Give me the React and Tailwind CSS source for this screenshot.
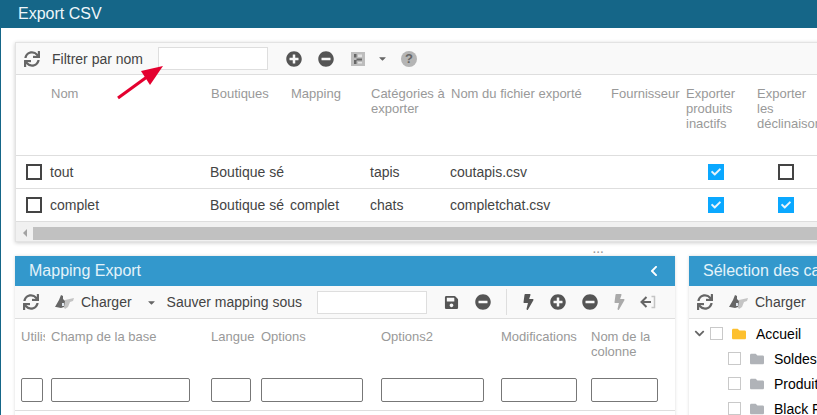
import React from "react";
import {
  FaCaretDown,
  FaCheck,
  FaChevronDown,
  FaChevronLeft,
  FaFolder,
  FaMinusCircle,
  FaPlusCircle,
  FaSave,
  FaBolt,
  FaSync,
} from "react-icons/fa";

const exportCols = [
  { label: "Nom", w: "w-[160px]" },
  { label: "Boutiques", w: "w-[80px]" },
  { label: "Mapping", w: "w-[80px]" },
  { label: "Catégories à exporter", w: "w-[80px]" },
  { label: "Nom du fichier exporté", w: "w-[160px]" },
  { label: "Fournisseur", w: "w-[75px]" },
  { label: "Exporter produits inactifs", w: "w-[71px]" },
  { label: "Exporter les déclinaisons", w: "w-[71px]" },
];

const exportRows = [
  { nom: "tout", boutique: "Boutique sé", mapping: "", cat: "tapis", file: "coutapis.csv", inactifs: true, decl: false },
  { nom: "complet", boutique: "Boutique sé", mapping: "complet", cat: "chats", file: "completchat.csv", inactifs: true, decl: true },
];

const mappingCols = [
  { label: "Utilisé", cell: "w-[30px]", head: "w-[24px]", input: "w-[22px]" },
  { label: "Champ de la base", cell: "w-[160px]", head: "w-[150px]", input: "w-[139px]" },
  { label: "Langue", cell: "w-[50px]", head: "w-[48px]", input: "w-[40px]" },
  { label: "Options", cell: "w-[120px]", head: "w-[110px]", input: "w-[102px]" },
  { label: "Options2", cell: "w-[120px]", head: "w-[110px]", input: "w-[103px]" },
  { label: "Modifications", cell: "w-[90px]", head: "w-[88px]", input: "w-[76px]" },
  { label: "Nom de la colonne", cell: "w-[70px]", head: "w-[68px]", input: "w-[67px]" },
];

const tree = [
  { label: "Accueil", root: true },
  { label: "Soldes" },
  { label: "Produits" },
  { label: "Black Friday" },
];

function LoadIcon() {
  return (
    <svg width="20" height="14" viewBox="0 0 20 14" className="shrink-0">
      <path d="M10 5l9-2-1 3-3 1-2 5-3 2-2-3 1-3z" fill="#c4c4c4" />
      <path d="M0 12L4 5l2-5 2 1 0 3 2 2-1 6-3 1-5-1z" fill="#666" />
      <path d="M7 8h2v3H7z" fill="#dfe6ee" />
    </svg>
  );
}

function ExitIcon({ className }) {
  return (
    <svg width="16" height="14" viewBox="0 0 16 14" className={className}>
      <path d="M6.5 2L1.5 7l5 5M2 7h9" fill="none" stroke="#666" strokeWidth="2" />
      <path d="M11.5 1.5h3v11h-3" fill="none" stroke="#c4c4c4" strokeWidth="1.5" />
    </svg>
  );
}

function LayoutIcon() {
  return (
    <svg width="14" height="14" viewBox="0 0 14 14" className="shrink-0">
      <rect width="14" height="14" fill="#bdbdbd" />
      <path d="M3 2h2.5v3.5H3zM3 8h2.5v4H3zM5.5 6.5H11v2H5.5z" fill="#666" />
      <path d="M7 2.5h4v2.5H7zM7 10h4v1.5H7z" fill="#e2e2e2" />
    </svg>
  );
}

function RowCheck({ checked }) {
  if (checked) {
    return (
      <span className="flex h-4 w-4 items-center justify-center bg-[#0aa8ff]">
        <FaCheck className="text-[10px] text-[#e8f4fb]" />
      </span>
    );
  }
  return <span className="block h-4 w-4 border-2 border-[#444]" />;
}

function PanelTitle({ children, chevron }) {
  return (
    <div className="flex h-[30px] items-center justify-between whitespace-nowrap bg-[#3398cc] pl-[14px] pr-[15px] text-base text-[#e4f3fa]">
      <span>{children}</span>
      {chevron && <FaChevronLeft className="text-[12px] text-white" />}
    </div>
  );
}

function LoadButton({ withCaret }) {
  return (
    <div className="flex items-center">
      <FaSync className="ml-2 h-4 w-4 shrink-0 text-[#666]" />
      <span className="ml-4">
        <LoadIcon />
      </span>
      <span className="ml-[6px] text-[#444]">Charger</span>
      {withCaret && <FaCaretDown className="ml-[14px] text-[11px] text-[#666]" />}
    </div>
  );
}

export default function App() {
  return (
    <div className="relative h-[415px] w-[817px] overflow-hidden border-l border-[#156688] bg-white font-['Liberation_Sans',Arial,sans-serif] text-sm text-[#444]">
      <div className="ml-[-1px] flex h-[28px] items-center bg-[#156688] pl-[18px] text-base text-[#eef6fa]">
        Export CSV
      </div>

      <div className="pl-[14px] pt-[14px]">
        <div className="w-[830px] overflow-hidden border border-[#e3e3e3] shadow-[0_1px_4px_rgba(0,0,0,0.2)]">
          <div className="flex h-[32px] items-center whitespace-nowrap border-b border-[#dedede] bg-[#f9f9f9]">
            <FaSync className="ml-2 h-4 w-4 shrink-0 text-[#666]" />
            <span className="ml-[12px] text-[#444]">Filtrer par nom</span>
            <div className="ml-[15px] h-[23px] w-[110px] border border-[#dedede] bg-white" />
            <FaPlusCircle className="ml-[18px] h-4 w-4 text-[#555]" />
            <FaMinusCircle className="ml-[16px] h-4 w-4 text-[#555]" />
            <span className="ml-[17px]">
              <LayoutIcon />
            </span>
            <FaCaretDown className="ml-[12px] text-[11px] text-[#666]" />
            <span className="ml-[13px] flex h-4 w-4 items-center justify-center rounded-full bg-[#b5b5b5] text-[13px] font-bold leading-none text-[#666]">
              ?
            </span>
          </div>

          <div className="flex h-[81px] border-b border-[#dedede] pl-[35px] pt-[11px] leading-[15px] text-[#999]">
            {exportCols.map((col) => (
              <div key={col.label} className={`${col.w} shrink-0 overflow-hidden pr-1 text-[13px]`}>
                {col.label}
              </div>
            ))}
          </div>

          {exportRows.map((row) => (
            <div key={row.nom} className="flex h-[33px] items-center border-b border-[#dedede] whitespace-nowrap pl-[10px]">
              <span className="w-[24px] shrink-0">
                <RowCheck checked={false} />
              </span>
              <span className="w-[160px] shrink-0">{row.nom}</span>
              <span className="w-[80px] shrink-0">{row.boutique}</span>
              <span className="w-[80px] shrink-0">{row.mapping}</span>
              <span className="w-[80px] shrink-0">{row.cat}</span>
              <span className="w-[160px] shrink-0">{row.file}</span>
              <span className="w-[98px] shrink-0" />
              <span className="w-[70px] shrink-0">
                <RowCheck checked={row.inactifs} />
              </span>
              <span className="w-[16px] shrink-0">
                <RowCheck checked={row.decl} />
              </span>
            </div>
          ))}

          <div className="flex h-[19px] items-center bg-[#f1f1f1] pt-[3px]">
            <div className="flex h-[13px] w-[17px] items-center justify-center">
              <span className="h-0 w-0 border-y-[4px] border-r-[4px] border-y-transparent border-r-[#a3a3a3]" />
            </div>
            <div className="h-[13px] flex-1 bg-[#c1c1c1]" />
          </div>
        </div>

        <div className="flex h-[14px] items-center pl-[578px] pt-[1px]">
          <span className="text-[10px] font-bold leading-none tracking-[1px] text-[#999]">...</span>
        </div>

        <div className="flex gap-[14px]">
          <div className="w-[660px] shrink-0 shadow-[0_0_3px_rgba(0,0,0,0.15)]">
            <PanelTitle chevron>Mapping Export</PanelTitle>
            <div className="flex h-[33px] items-center whitespace-nowrap border-b border-[#dedede] bg-[#f9f9f9]">
              <LoadButton withCaret />
              <span className="ml-[10px]">Sauver mapping sous</span>
              <div className="ml-[15px] h-[23px] w-[110px] border border-[#dedede] bg-white" />
              <FaSave className="ml-[17px] h-[15px] w-[15px] text-[#555]" />
              <FaMinusCircle className="ml-[16px] h-4 w-4 text-[#555]" />
              <span className="ml-[15px] h-[26px] w-px bg-[#dedede]" />
              <FaBolt className="ml-[16px] h-4 w-[11px] text-[#555]" />
              <FaPlusCircle className="ml-[16px] h-4 w-4 text-[#555]" />
              <FaMinusCircle className="ml-[16px] h-4 w-4 text-[#555]" />
              <FaBolt className="ml-[16px] h-4 w-[11px] text-[#aaa]" />
              <ExitIcon className="ml-[15px]" />
            </div>
            <div className="flex h-[92px] border-b border-[#dedede] pl-[6px]">
              {mappingCols.map((col) => (
                <div key={col.label} className={`${col.cell} flex shrink-0 flex-col`}>
                  <div className="h-[59px] pt-[10px]">
                    <div className={`${col.head} overflow-hidden text-[13px] leading-[15px] text-[#999]`}>
                      {col.label}
                    </div>
                  </div>
                  <div className={`${col.input} h-[24px] rounded-[2px] border border-[#777] bg-white`} />
                </div>
              ))}
            </div>
          </div>

          <div className="w-[200px] shrink-0 shadow-[0_0_3px_rgba(0,0,0,0.15)]">
            <PanelTitle>Sélection des catégories</PanelTitle>
            <div className="flex h-[33px] items-center whitespace-nowrap border-b border-[#dedede] bg-[#f9f9f9]">
              <LoadButton />
            </div>
            <div className="pt-[2px] whitespace-nowrap text-black">
              {tree.map((node) => (
                <div key={node.label} className={`flex h-[25px] items-center ${node.root ? "pl-[5px]" : "pl-[39px]"}`}>
                  {node.root && <FaChevronDown className="mr-[5px] w-[11px] text-[11px] text-[#666]" />}
                  <span className="h-[13px] w-[13px] shrink-0 border border-[#c9c9c9] bg-white" />
                  <FaFolder className={`ml-[8px] h-[14px] w-[16px] shrink-0 ${node.root ? "text-[#fdc02f]" : "text-[#b0b3b8]"}`} />
                  <span className="ml-[9px] text-[14px]">{node.label}</span>
                </div>
              ))}
            </div>
          </div>
        </div>
      </div>

      {/* fleche d'annotation */}
      <svg width="60" height="50" viewBox="0 0 60 50" className="absolute left-[110px] top-[60px]">
        <path d="M7 38L40 14" stroke="#e4002f" strokeWidth="3" />
        <path d="M52 6L30 11 39 25z" fill="#e4002f" />
      </svg>
    </div>
  );
}
